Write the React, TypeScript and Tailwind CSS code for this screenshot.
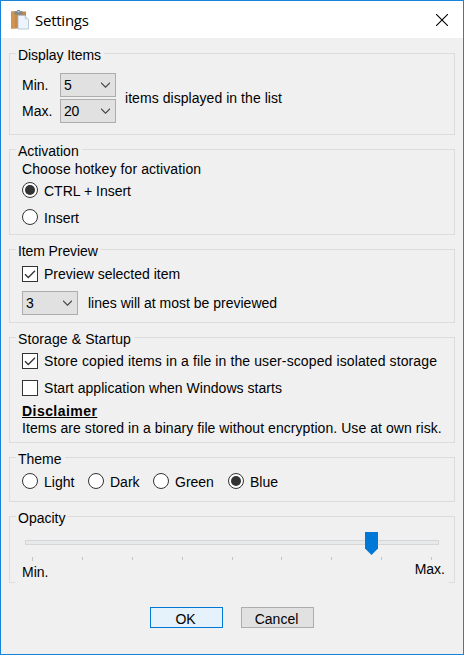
import React from "react";

type Children = { children: React.ReactNode };

function Group({ title, spacing, className, children }: Children & { title: string; spacing: string; className: string }) {
  return (
    <section className={`flex flex-col border border-[#dcdcdc] pl-3 ${className}`}>
      <h2 className={`-ml-1.5 -mt-[7px] h-4 shrink-0 self-start bg-[#f0f0f0] pl-[2px] pr-[3px] ${spacing}`}>{title}</h2>
      {children}
    </section>
  );
}

function Select({ value }: { value: string }) {
  return (
    <button className="flex h-6 w-14 shrink-0 items-center justify-between border border-[#adadad] bg-[#e1e1e1] pl-[3px] pr-[5px]">
      <span className="tracking-[-0.4px]">{value}</span>
      <svg width="9" height="6" viewBox="0 0 9 6" fill="none" stroke="#444" strokeWidth="1.1">
        <path d="M0 .7 4.5 5.2 9 .7" />
      </svg>
    </button>
  );
}

function Radio({ checked, children }: Children & { checked?: boolean }) {
  return (
    <label className="flex h-4 items-start gap-[6px]">
      <svg width="16" height="16" viewBox="0 0 16 16">
        <circle cx="8" cy="8" r="7.5" fill="white" stroke="#333" />
        {checked && <circle cx="8" cy="8" r="5" fill="#333" />}
      </svg>
      <span className="mt-px">{children}</span>
    </label>
  );
}

function Checkbox({ checked, spacing, children }: Children & { checked?: boolean; spacing: string }) {
  return (
    <label className="flex h-4 gap-[6px]">
      <svg width="16" height="16" viewBox="0 0 16 16">
        <rect x=".5" y=".5" width="15" height="15" fill="white" stroke="#333" />
        {checked && <path d="M3 8.2 6.3 11.5 13 4.7" fill="none" stroke="#333" strokeWidth="1.3" />}
      </svg>
      <span className={spacing}>{children}</span>
    </label>
  );
}

function ClipboardIcon() {
  return (
    <svg width="18" height="20" viewBox="0 0 18 20">
      <path d="M0 1.500h15v17H0z" fill="#c48a4a" />
      <path d="M0 1.500h4v17H0z" fill="#cf9450" />
      <path d="M3.500 1.200h2C6 -.3 9 -.3 9.500 1.200h2v3.300h-8z" fill="#7c8790" />
      <path d="M6.500 1.200h2v1h-2z" fill="#d8dde0" />
      <path d="M7 5.500h6.800l3.700 3.800v9.700H7z" fill="#edf4fb" stroke="#a9bccd" strokeWidth=".8" />
      <path d="M13.600 5.600v3.700h3.800z" fill="#c5d7e8" />
    </svg>
  );
}

const ticks = [32, 82, 132, 182, 232, 281, 331, 381, 431];

export default function App() {
  return (
    <div className="flex h-[655px] w-[464px] flex-col whitespace-nowrap border border-[#1883d7] bg-[#f0f0f0] font-['Liberation_Sans',Arial,sans-serif] text-[14px] leading-4 text-black">
      <header className="flex h-[37px] shrink-0 items-center bg-white pl-[10px] pr-[15px]">
        <ClipboardIcon />
        <h1 className="ml-[6px] font-['Open_Sans',sans-serif] text-[15px] leading-5 tracking-[-0.25px]">Settings</h1>
        <svg className="ml-auto" width="12" height="12" viewBox="0 0 12 12" stroke="black" strokeWidth="1.1">
          <path d="M0 0 12 12M12 0 0 12" />
        </svg>
      </header>

      <main className="flex flex-col gap-[14px] px-2 pt-[15px]">
        <Group title="Display Items" spacing="tracking-[-0.08px]" className="h-[82px]">
          <div className="mt-[10px] flex items-center">
            <div className="flex w-[38px] flex-col gap-[10px]">
              <span>Min.</span>
              <span>Max.</span>
            </div>
            <div className="flex flex-col gap-[2px]">
              <Select value="5" />
              <Select value="20" />
            </div>
            <span className="ml-[9px] tracking-[0.05px]">items displayed in the list</span>
          </div>
        </Group>

        <Group title="Activation" spacing="tracking-[0px]" className="h-[86px]">
          <p className="mt-[2px] tracking-[0.09px]">Choose hotkey for activation</p>
          <div className="mt-[5px] flex flex-col gap-[11px]">
            <Radio checked>CTRL + Insert</Radio>
            <Radio>Insert</Radio>
          </div>
        </Group>

        <Group title="Item Preview" spacing="tracking-[-0.1px]" className="h-[74px]">
          <div className="mt-[7px]">
            <Checkbox checked spacing="tracking-[0px]">Preview selected item</Checkbox>
          </div>
          <div className="mt-[9px] flex items-center gap-[10px]">
            <Select value="3" />
            <span>lines will at most be previewed</span>
          </div>
        </Group>

        <Group title="Storage &amp; Startup" spacing="tracking-[0.1px]" className="h-[106px]">
          <div className="mt-[6px] flex flex-col gap-[11px]">
            <Checkbox checked spacing="tracking-[0.11px]">Store copied items in a file in the user-scoped isolated storage</Checkbox>
            <Checkbox spacing="tracking-[0.04px]">Start application when Windows starts</Checkbox>
          </div>
          <strong className="mt-[7px] h-4 self-start tracking-[0.45px] underline">Disclaimer</strong>
          <p className="mt-px tracking-[0.06px]">Items are stored in a binary file without encryption. Use at own risk.</p>
        </Group>

        <Group title="Theme" spacing="tracking-[0px]" className="h-[45px]">
          <div className="mt-[6px] grid grid-cols-[66px_65px_75px_1fr]">
            <Radio>Light</Radio>
            <Radio>Dark</Radio>
            <Radio>Green</Radio>
            <Radio checked>Blue</Radio>
          </div>
        </Group>

        <Group title="Opacity" spacing="tracking-[0px]" className="relative h-[67px]">
          <svg className="-ml-3 mt-[6px] shrink-0" width="444" height="29" viewBox="10 532 444 29">
            <rect x="25.500" y="540.500" width="413" height="4" fill="#e7eaea" stroke="#d6d6d6" />
            {ticks.map((x, i) => (
              <rect key={x} x={x} y="557" width="1" height={i === 0 ? 4 : 3} fill="#c4c4c4" />
            ))}
            <path d="M365 532h13v16.500L371.500 555 365 548.500z" fill="#0078d7" />
          </svg>
          <div className="flex justify-between pr-[9px]">
            <span className="mt-[3px]">Min.</span>
            <span>Max.</span>
          </div>
          <div className="absolute -bottom-px left-[5px] right-[5px] h-px bg-[#f0f0f0]" />
        </Group>
      </main>

      <footer className="mt-6 flex gap-[18px] pl-[149px]">
        <button className="h-[21px] w-[73px] border border-[#0078d7] bg-[#e5f1fb] pr-[2px] pt-[2px] leading-4">OK</button>
        <button className="h-[21px] w-[73px] border border-[#adadad] bg-[#e1e1e1] pr-[2px] pt-[2px] leading-4">Cancel</button>
      </footer>
    </div>
  );
}
